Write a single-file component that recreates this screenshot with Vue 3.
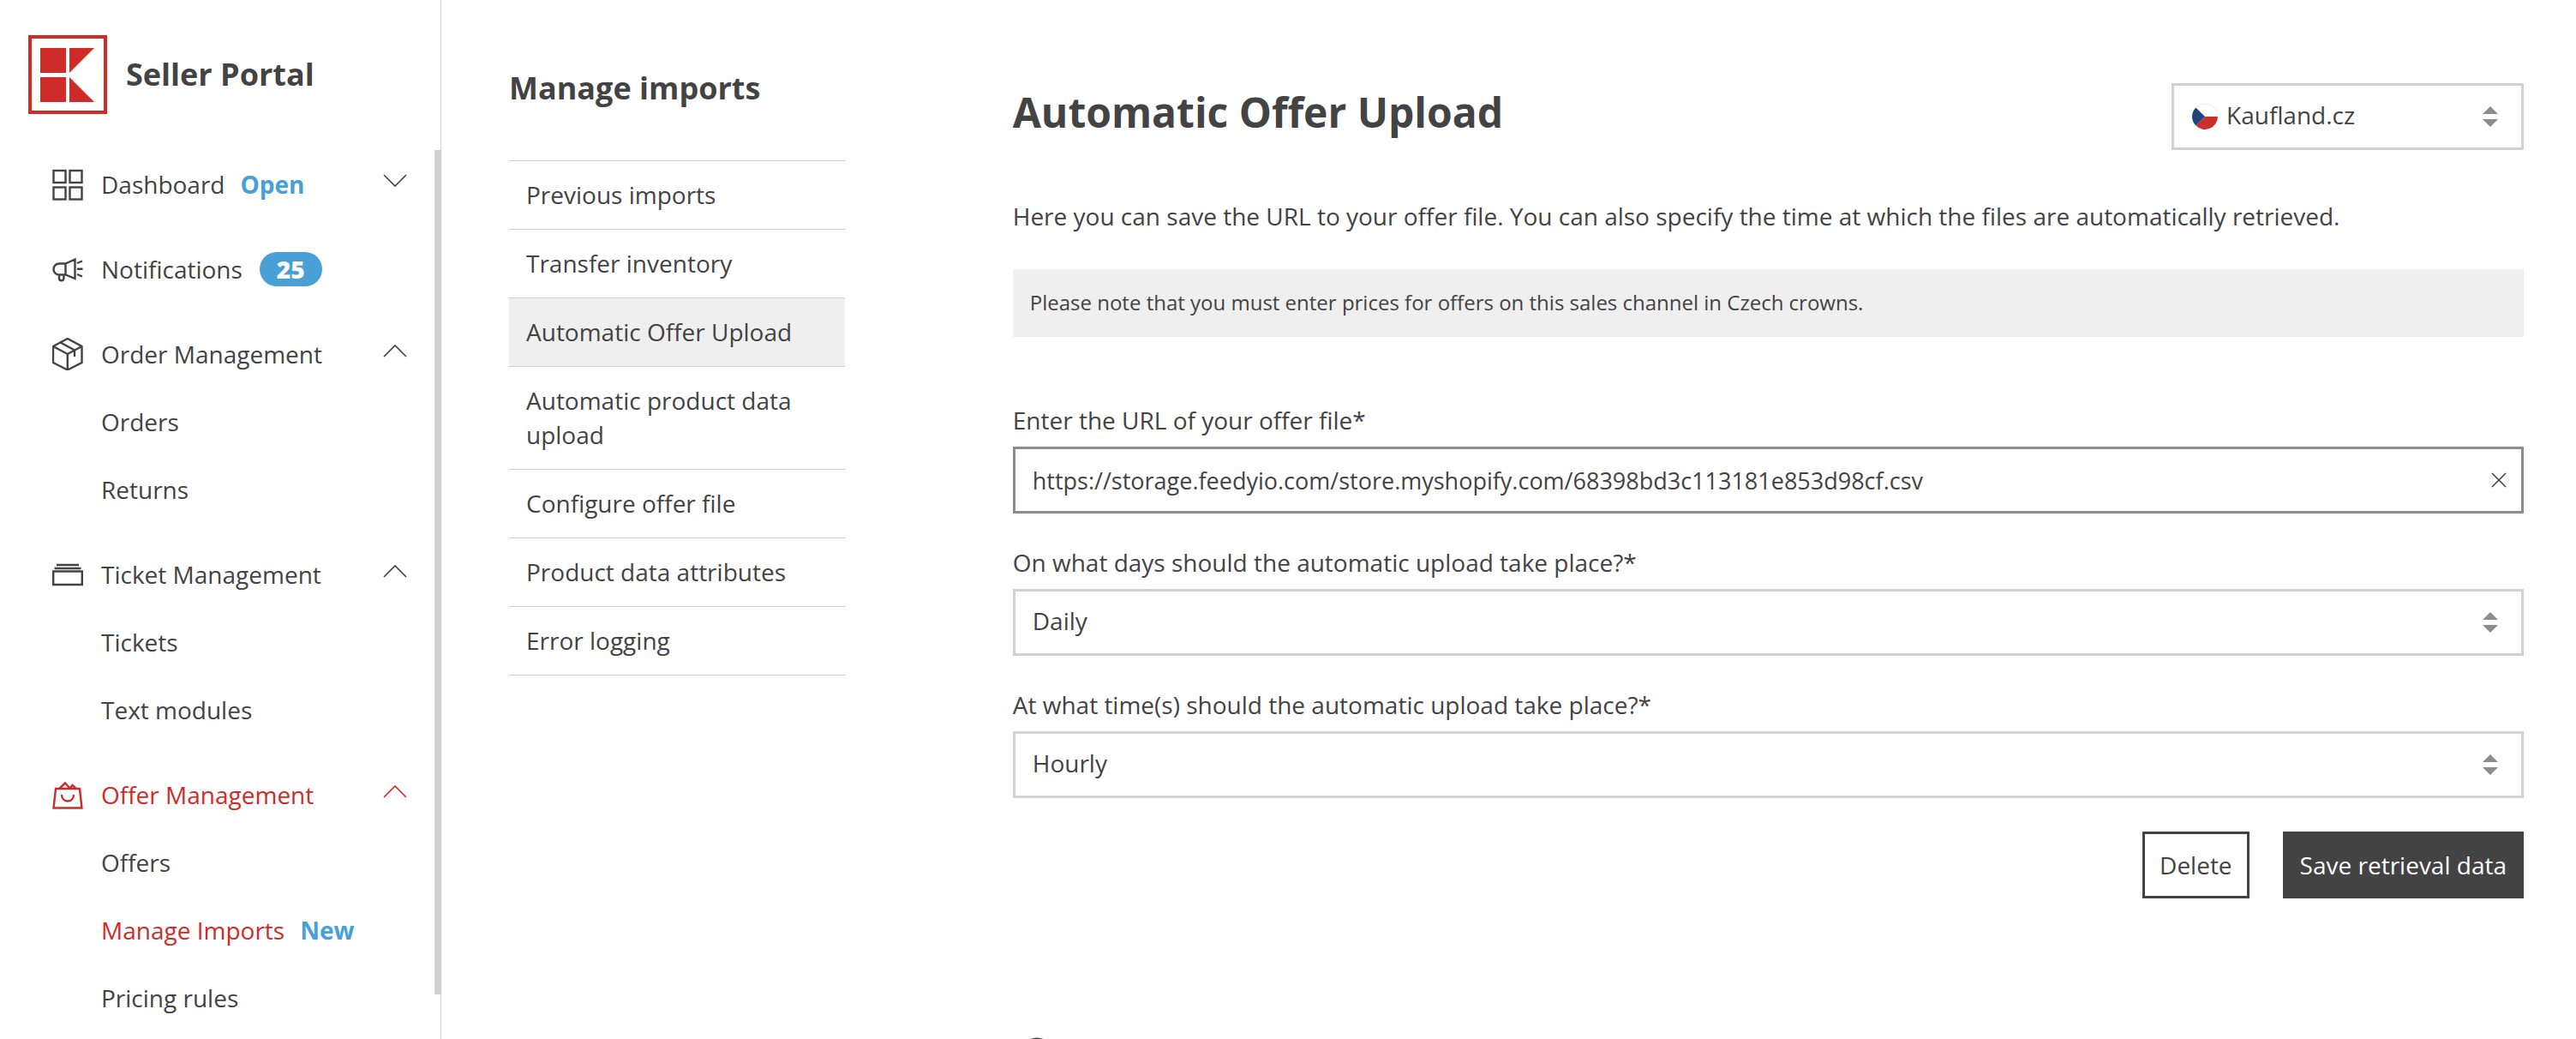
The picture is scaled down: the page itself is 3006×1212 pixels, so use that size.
<script setup>
import { ref } from 'vue'

const groups = [
  { label: 'Dashboard', icon: 'grid', tag: 'Open', chevron: 'down', items: [] },
  { label: 'Notifications', icon: 'megaphone', badge: '25', items: [] },
  { label: 'Order Management', icon: 'box', chevron: 'up', items: [{ label: 'Orders' }, { label: 'Returns' }] },
  { label: 'Ticket Management', icon: 'tickets', chevron: 'up', items: [{ label: 'Tickets' }, { label: 'Text modules' }] },
  {
    label: 'Offer Management', icon: 'bag', chevron: 'up', active: true,
    items: [{ label: 'Offers' }, { label: 'Manage Imports', tag: 'New', active: true }, { label: 'Pricing rules' }]
  }
]

const sections = [
  'Previous imports', 'Transfer inventory', 'Automatic Offer Upload', 'Automatic product data upload',
  'Configure offer file', 'Product data attributes', 'Error logging'
]
const currentSection = 'Automatic Offer Upload'

const storefront = ref('Kaufland.cz')
const url = ref('https://storage.feedyio.com/store.myshopify.com/68398bd3c113181e853d98cf.csv')
const days = ref('Daily')
const times = ref('Hourly')
</script>

<template>
  <div class="app">
    <aside class="sidebar">
      <a class="brand" href="#">
        <svg class="logo" viewBox="0 0 92 92" aria-hidden="true">
          <rect x="2" y="2" width="88" height="88" fill="#fff" stroke="#cf2b28" stroke-width="4" />
          <path fill="#cf2b28" d="M14 15h30v29H14zM14 49h30v29H14zM48 15h29L48 44zM48 49l29 29H48z" />
        </svg>
        <span>Seller Portal</span>
      </a>
      <nav class="nav" aria-label="Main">
        <div v-for="g in groups" :key="g.label" class="group">
          <a class="row head" :class="{ active: g.active }" href="#">
            <svg class="icon" viewBox="0 0 36 38" aria-hidden="true">
              <template v-if="g.icon === 'grid'">
                <rect x="1.500" y="3" width="14" height="14" /><rect x="20.500" y="3" width="14" height="14" />
                <rect x="1.500" y="22.500" width="14" height="14" /><rect x="20.500" y="22.500" width="14" height="14" />
              </template>
              <template v-else-if="g.icon === 'megaphone'">
                <path d="M15.500 12.500H8a6.500 6.500 0 0 0 0 13h7.500l11 4.500V7.500zM15.500 12.500v13M8 25.500v4a2.700 2.700 0 0 0 5.400 0v-4M29 12l6-2.500M29 18.800h6.500M29 25l6 2.500" />
              </template>
              <template v-else-if="g.icon === 'box'">
                <path d="M17.800 1L34.500 10v19L17.800 37.500 1 29V10zM1 10l16.800 9L34.500 10M17.800 19v18.500M9.500 5.500L26 14.500V22" />
              </template>
              <template v-else-if="g.icon === 'tickets'">
                <path d="M5 8h26M2.500 12h31M1.200 15.500h33.600V31H1.200z" />
              </template>
              <template v-else>
                <path d="M4 12h28L34.500 34.500H1.500zM8 12l7-6.500 5.500 6 3-3.500 4.500 4M11 19c.500 10 13.500 10 14 0" />
              </template>
            </svg>
            <span>{{ g.label }}</span>
            <strong v-if="g.tag" class="tag">{{ g.tag }}</strong>
            <strong v-if="g.badge" class="badge">{{ g.badge }}</strong>
            <svg v-if="g.chevron" class="chevron" viewBox="0 0 28 16" aria-hidden="true">
              <path :d="g.chevron === 'up' ? 'M1 15L14 2l13 13' : 'M1 1l13 13L27 1'" />
            </svg>
          </a>
          <a v-for="i in g.items" :key="i.label" class="row sub" :class="{ active: i.active }" href="#">
            <span>{{ i.label }}</span>
            <strong v-if="i.tag" class="tag">{{ i.tag }}</strong>
          </a>
        </div>
        <span class="scroll-thumb"></span>
      </nav>
    </aside>

    <div class="content">
      <section class="sections">
        <h2>Manage imports</h2>
        <nav aria-label="Manage imports">
          <a v-for="s in sections" :key="s" href="#" :class="{ current: s === currentSection }">{{ s }}</a>
        </nav>
      </section>

      <main class="main">
        <header class="top">
          <h1>Automatic Offer Upload</h1>
          <div class="select storefront">
            <svg class="flag" viewBox="0 0 32 32" aria-hidden="true">
              <circle cx="16" cy="16" r="15" fill="#fff" />
              <path d="M16 16h15A15 15 0 0 1 5.400 26.600z" fill="#c8312b" />
              <path d="M16 16L5.400 5.400a15 15 0 0 0 0 21.200z" fill="#21437c" />
              <path d="M5.400 5.400A15 15 0 0 1 31 16" fill="none" stroke="#ececec" />
            </svg>
            <select v-model="storefront" aria-label="Storefront"><option>Kaufland.cz</option></select>
            <svg class="arrows" viewBox="0 0 18 24" aria-hidden="true"><path d="M9 0l9 9H0zM9 24l9-9H0z" /></svg>
          </div>
        </header>

        <p class="intro">Here you can save the URL to your offer file. You can also specify the time at which the files are automatically retrieved.</p>
        <p class="note">Please note that you must enter prices for offers on this sales channel in Czech crowns.</p>

        <form class="form" @submit.prevent>
          <div class="field">
            <label for="url">Enter the URL of your offer file*</label>
            <div class="input">
              <input id="url" v-model="url" type="text" />
              <button class="clear" type="button" aria-label="Clear" @click="url = ''">
                <svg viewBox="0 0 18 18" aria-hidden="true"><path d="M1 1l16 16M17 1L1 17" /></svg>
              </button>
            </div>
          </div>
          <div class="field">
            <label for="days">On what days should the automatic upload take place?*</label>
            <div class="select">
              <select id="days" v-model="days"><option>Daily</option></select>
              <svg class="arrows" viewBox="0 0 18 24" aria-hidden="true"><path d="M9 0l9 9H0zM9 24l9-9H0z" /></svg>
            </div>
          </div>
          <div class="field">
            <label for="times">At what time(s) should the automatic upload take place?*</label>
            <div class="select">
              <select id="times" v-model="times"><option>Hourly</option></select>
              <svg class="arrows" viewBox="0 0 18 24" aria-hidden="true"><path d="M9 0l9 9H0zM9 24l9-9H0z" /></svg>
            </div>
          </div>
          <div class="actions">
            <button class="btn" type="button">Delete</button>
            <button class="btn primary" type="submit">Save retrieval data</button>
          </div>
        </form>

        <svg class="hint" viewBox="0 0 40 40" aria-hidden="true"><circle cx="20" cy="20" r="18" /></svg>
      </main>
    </div>
  </div>
</template>

<style>
body {
  margin: 0;
  background: #fff;
}
</style>

<style scoped>
.app,
.app * {
  box-sizing: border-box;
}
.app {
  display: flex;
  height: 100vh;
  overflow: hidden;
  color: #434343;
  font: 400 28px/40px "Open Sans", "Noto Sans", sans-serif;
}
a {
  color: inherit;
  text-decoration: none;
}
h1, h2, p {
  margin: 0;
}

.sidebar {
  flex: 0 0 515px;
  display: flex;
  flex-direction: column;
  border-right: 1px solid #d1d1d1;
}
.brand {
  display: flex;
  align-items: center;
  gap: 22px;
  padding: 41px 0 42px 33px;
  font-size: 36px;
  font-weight: 700;
}
.logo {
  width: 92px;
  height: 92px;
}
.nav {
  position: relative;
  flex: 1;
  min-height: 0;
}
.group {
  margin-bottom: 20px;
}
.row {
  display: flex;
  align-items: center;
  height: 79px;
  padding-right: 39px;
}
.head {
  padding-left: 61px;
}
.sub {
  padding-left: 118px;
}
.active {
  color: #cf2b28;
}
.icon {
  width: 36px;
  height: 38px;
  margin-right: 21px;
  fill: none;
  stroke: currentColor;
  stroke-width: 2.4;
}
.tag {
  margin-left: 18px;
  color: #48a0d6;
  font-weight: 700;
}
.badge {
  margin-left: 20px;
  padding: 0 20px;
  border-radius: 20px;
  background: #48a0d6;
  color: #fff;
  font-weight: 800;
}
.chevron {
  width: 28px;
  height: 16px;
  margin: 0 0 8px auto;
  fill: none;
  stroke: currentColor;
  stroke-width: 1.6;
}
.scroll-thumb {
  position: absolute;
  top: 0;
  right: 0;
  width: 7px;
  height: 95%;
  background: #d1d1d1;
}

.content {
  flex: 1;
  display: grid;
  grid-template-columns: 2fr 1fr 9fr;
  padding: 0 61px 0 79px;
}
.sections {
  padding-top: 83px;
}
.sections h2 {
  margin-bottom: 64px;
  font-size: 36px;
  line-height: 40px;
}
.sections nav {
  border-top: 1px solid #d1d1d1;
}
.sections a {
  display: block;
  padding: 19px 20px 20px;
  border-bottom: 1px solid #d1d1d1;
}
.sections .current {
  background: #efefef;
}

.main {
  grid-column: 3;
  min-width: 0;
  padding-top: 97px;
}
.top {
  display: flex;
  align-items: flex-start;
  justify-content: space-between;
}
.top h1 {
  font-size: 48px;
  line-height: 68px;
}
.intro {
  margin-top: 57px;
}
.note {
  margin-top: 42px;
  padding: 19px 20px 20px;
  background: #efefef;
  font-size: 24px;
}

.form {
  margin-top: 77px;
}
.field {
  margin-bottom: 37px;
}
.field label {
  display: block;
  margin-bottom: 11px;
}
.input,
.select {
  position: relative;
}
.input input,
.select select {
  display: block;
  width: 100%;
  height: 78px;
  margin: 0;
  border: 3px solid #d1d1d1;
  border-radius: 0;
  outline: 0;
  appearance: none;
  background: #fff;
  color: inherit;
  font: inherit;
}
.input input {
  padding: 0 80px 0 20px;
  border-color: #8c8c8c;
  font-size: 27px;
}
.select select {
  padding: 0 80px 4px 20px;
}
.storefront {
  flex: 0 0 411px;
}
.storefront select {
  padding-left: 61px;
}
.flag {
  position: absolute;
  top: 23px;
  left: 23px;
  width: 32px;
  height: 32px;
}
.arrows {
  position: absolute;
  top: 27px;
  right: 30px;
  width: 18px;
  height: 24px;
  fill: #8c8c8c;
  pointer-events: none;
}
.clear {
  position: absolute;
  top: 19px;
  right: 9px;
  width: 40px;
  height: 40px;
  padding: 11px;
  border: 0;
  background: none;
}
.clear svg {
  display: block;
  width: 18px;
  height: 18px;
  stroke: #434343;
  stroke-width: 1.6;
}
.actions {
  display: flex;
  justify-content: flex-end;
  gap: 39px;
  padding-top: 2px;
}
.btn {
  height: 78px;
  padding: 0 17px;
  border: 3px solid #434343;
  background: #fff;
  color: #434343;
  font: inherit;
}
.btn.primary {
  background: #434343;
  color: #fff;
}
.hint {
  display: block;
  width: 40px;
  height: 40px;
  margin: 162px 0 0 8px;
  fill: none;
  stroke: #434343;
  stroke-width: 3;
}
</style>
